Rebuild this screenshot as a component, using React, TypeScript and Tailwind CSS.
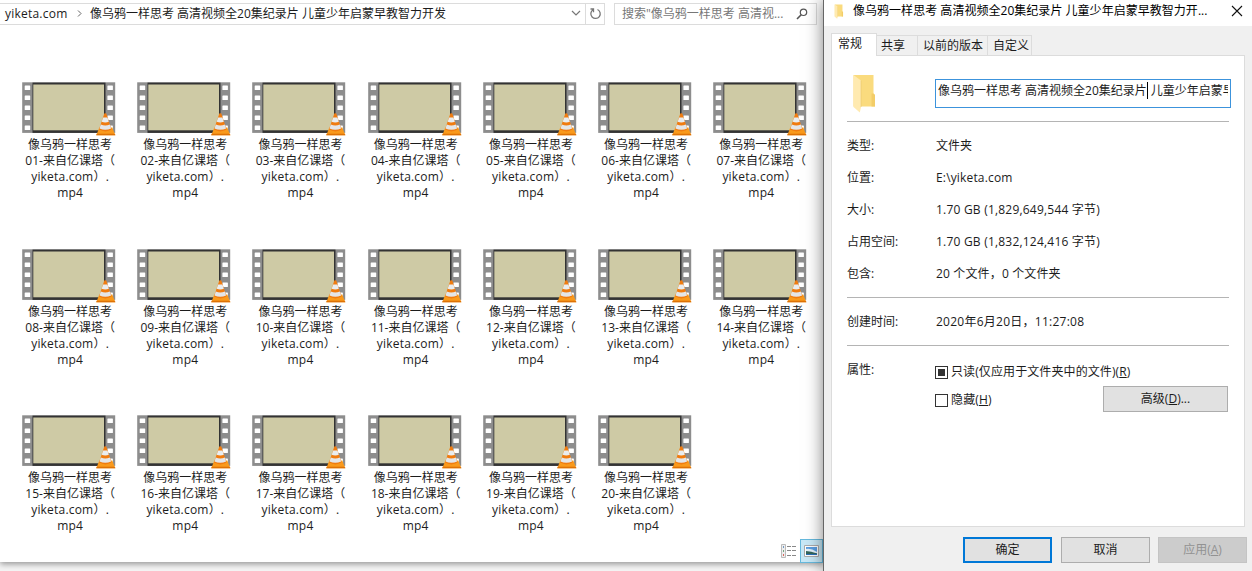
import React from "react";

const TITLE = "像乌鸦一样思考 高清视频全20集纪录片 儿童少年启蒙早教智力开";

const episodes = Array.from({ length: 20 }, (_, i) => String(i + 1).padStart(2, "0"));

const details = [
  ["类型:", "文件夹", ""],
  ["位置:", "E:\\yiketa.com", "tracking-[0.16px]"],
  ["大小:", "1.70 GB (1,829,649,544 字节)", "tracking-[0.21px]"],
  ["占用空间:", "1.70 GB (1,832,124,416 字节)", "tracking-[0.21px]"],
  ["包含:", "20 个文件，0 个文件夹", "tracking-[0.15px]"],
];

function FilmIcon() {
  const holes = [5.5, 15.5, 25.5, 35.5, 45.5];
  return (
    <svg width="94" height="54" viewBox="0 0 94 54" className="block">
      <rect x="0.2" y="0.3" width="93" height="50.6" fill="#8d8d8d" />
      <rect x="10.5" y="0.6" width="73" height="50.3" fill="#333" />
      <rect x="11.3" y="2.5" width="70.7" height="45.8" fill="#cecaa5" />
      {holes.map((y) => (
        <g key={y} fill="#fff">
          <rect x="2.7" y={y - 2.1} width="5.5" height="4.6" rx="0.6" />
          <rect x="85.4" y={y - 2.1} width="5.5" height="4.6" rx="0.6" />
        </g>
      ))}
      <path d="M77.300 45.500h13l3 7.700H74.300z" fill="#f99a1c" />
      <path d="M74.600 51.800h18.400l.3 1.400H74.300z" fill="#dd7206" />
      <path d="M82.300 31.600q1-.8 2 0l5.300 16q-6 3.600-12.600 0z" fill="#f07c10" />
      <path d="M81.100 35.600h4.400l1.300 4.100q-3.500 1.500-7.100 0z" fill="#e9edf0" />
      <path d="M78.800 42.600q4.500 2 9 0l1.300 3.800q-5.800 2.800-11.600 0z" fill="#e4e6e8" />
    </svg>
  );
}

function FolderIcon({ width, height }: { width: number; height: number }) {
  return (
    <svg width={width} height={height} viewBox="0 0 23 39" className="block">
      <path d="M.5 1H20.500v18.500l1.500 1.500v11.500H.5z" fill="#fadb7e" />
      <path d="M18.500 19.500h2l1.500 1.500v11.500h-3.500z" fill="#f3cd68" />
      <path d="M.5 1l7.500 5.500v26.500L6.800 38.500.5 33z" fill="#ffeab0" />
      <path d="M7.700 6.500h.7V33h-.7z" fill="#eccb70" />
    </svg>
  );
}

function FileItem({ no }: { no: string }) {
  return (
    <div className="flex h-[166.5px] flex-col items-center">
      <FilmIcon />
      <div className="whitespace-nowrap pl-[2px] pt-px text-center leading-4">
        <div>像乌鸦一样思考</div>
        <div>{no}-来自亿课塔（</div>
        <div className="tracking-[0.2px]">yiketa.com）.</div>
        <div className="tracking-[0.2px]">mp4</div>
      </div>
    </div>
  );
}

function Explorer() {
  return (
    <section className="flex h-[562px] w-[823px] shrink-0 flex-col bg-white shadow-[0_2px_6px_rgba(0,0,0,0.4)]">
      <header className="flex h-[25px] shrink-0 items-center pt-[2px]">
        <div className="flex h-[22px] w-[605px] items-center border-y border-r border-[#dcdcdc] pl-[5px]">
          <span className="w-[71px] tracking-[0.22px]">yiketa.com</span>
          <svg width="8" height="9" viewBox="0 0 8 9" fill="none" stroke="#666">
            <path d="M2 1.500l3 3-3 3" />
          </svg>
          <span className="ml-[6px] flex-1 whitespace-nowrap">{TITLE}发</span>
          <svg width="10" height="7" viewBox="0 0 10 7" fill="none" stroke="#777" strokeWidth="1.2">
            <path d="M1 1l4 4 4-4" />
          </svg>
          <div className="ml-[4px] flex h-full w-[19px] items-center justify-center border-l border-[#dcdcdc]">
            <svg width="13" height="13" viewBox="0 0 13 13" fill="none" stroke="#777" strokeWidth="1.3">
              <path d="M8.500 2.500a4.700 4.700 0 1 1-4.500.3M1.500 2h3v3.300" />
            </svg>
          </div>
        </div>
        <div className="ml-[9px] flex h-[22px] w-[203px] items-center justify-between border border-[#dcdcdc] pl-[7px] pr-[8px] text-[#777]">
          <span className="whitespace-nowrap">搜索"像乌鸦一样思考 高清视...</span>
          <svg width="12" height="12" viewBox="0 0 12 12" fill="none" stroke="#555" strokeWidth="1.2">
            <circle cx="7.500" cy="4.300" r="3.200" />
            <path d="M5.200 6.700L1 11" strokeWidth="1.600" />
          </svg>
        </div>
      </header>
      <main className="ml-[11.5px] grid min-h-0 w-[806.4px] flex-1 grid-cols-7 content-start pt-[57px]">
        {episodes.map((no) => (
          <FileItem key={no} no={no} />
        ))}
      </main>
      <footer className="-mb-px flex h-[24px] shrink-0 items-center justify-end">
        <svg width="16" height="14" viewBox="0 0 16 14" className="mr-[3px]">
          <path d="M.5.5h4v13h-4z" fill="#eee" stroke="#bbb" />
          <path d="M6 2.500h4M11 2.500h4M6 6.500h4M11 6.500h4M6 11.500h4M11 11.500h4" stroke="#888" />
          <path d="M2 3h1" stroke="#4479b0" strokeWidth="1.500" />
          <path d="M2 7h1" stroke="#4b8a58" strokeWidth="1.500" />
          <path d="M2 11h1" stroke="#d23a2a" strokeWidth="1.500" />
        </svg>
        <div className="flex h-[24px] w-[23px] items-center justify-center border border-[#66b9dd] bg-[#c8e8f6]">
          <svg width="15" height="12" viewBox="0 0 15 12">
            <path d="M.5.5h14v11H.5z" fill="#fff" stroke="#aaa" />
            <path d="M2 2h11v8H2z" fill="#5b9ee0" />
            <path d="M2 4q5-1 11 3v1H2z" fill="#e4f1fa" />
            <path d="M2 6q5 0 11 2.500V10H2z" fill="#33665c" />
            <path d="M2 9h11v1H2z" fill="#2c71b8" />
          </svg>
        </div>
      </footer>
    </section>
  );
}

function Rule() {
  return <div className="h-px w-[382px] shrink-0 bg-[#b4b4b4]" />;
}

function PropertiesDialog() {
  return (
    <section className="relative flex h-[571px] w-[429px] shrink-0 flex-col border-l border-[#666] bg-[#f0f0f0] shadow-[0_0_16px_rgba(0,0,0,0.5)]">
      <header className="flex h-[26px] items-center bg-white pb-[4px] pl-[10px] text-black">
        <FolderIcon width={10} height={15} />
        <span className="ml-[9px] w-[378px] whitespace-nowrap tracking-[0.03px]">{TITLE}...</span>
        <svg width="12" height="12" viewBox="0 0 12 12" stroke="#111" strokeWidth="1.100">
          <path d="M1 1l10 10M11 1L1 11" />
        </svg>
      </header>
      <nav className="flex h-[29px] items-end pl-[7px]">
        <div className="z-10 -mb-px flex h-[23px] w-[46px] border border-b-0 border-[#dcdcdc] bg-white pl-[6px] pt-px">常规</div>
        <div className="flex h-[20px] w-[41px] items-center border-r border-t border-[#dcdcdc] pl-[4px]">共享</div>
        <div className="flex h-[20px] w-[70px] items-center border-r border-t border-[#dcdcdc] pl-[5px]">以前的版本</div>
        <div className="flex h-[20px] w-[44px] items-center border-r border-t border-[#dcdcdc] pl-[5px]">自定义</div>
      </nav>
      <div className="ml-[7px] flex h-[472px] w-[414px] flex-col border border-[#dcdcdc] bg-white pl-[15px]">
        <div className="flex h-[65px] shrink-0 items-start pt-[18px]">
          <div className="w-[88px] pl-[6px]">
            <FolderIcon width={23} height={39} />
          </div>
          <div className="mt-[5px] flex h-[29px] w-[296px] overflow-hidden whitespace-nowrap border border-[#3c93dc] pl-[2px] pr-[2px] pt-[2px]">
            <div className="flex w-full overflow-hidden">
              <span>像乌鸦一样思考 高清视频全20集纪录片</span>
              <span className="h-[17px] w-px shrink-0 bg-black" />
              <span className="ml-[3px]">儿童少年启蒙早教</span>
            </div>
          </div>
        </div>
        <Rule />
        <div className="flex h-[175px] shrink-0 flex-col pt-[8px]">
          {details.map(([k, v, cls]) => (
            <div key={k} className="flex h-[32px] items-center">
              <span className="w-[89px]">{k}</span>
              <span className={cls}>{v}</span>
            </div>
          ))}
        </div>
        <Rule />
        <div className="flex h-[47px] shrink-0 items-center">
          <span className="w-[89px]">创建时间:</span>
          <span className="tracking-[0.25px]">2020年6月20日，11:27:08</span>
        </div>
        <Rule />
        <div className="flex pt-[15px]">
          <span className="w-[88px]">属性:</span>
          <div className="flex w-[168px] flex-col pt-px">
            <label className="flex h-[20px] items-center whitespace-nowrap">
              <span className="mr-[3px] flex size-[13px] shrink-0 items-center justify-center border border-[#333] bg-white">
                <span className="size-[7px] bg-[#333]" />
              </span>
              <span className="tracking-[0.1px]">只读(仅应用于文件夹中的文件)(<u>R</u>)</span>
            </label>
            <label className="mt-[8px] flex h-[20px] items-center">
              <span className="mr-[3px] size-[13px] border border-[#333] bg-white" />
              <span className="tracking-[0.15px]">隐藏(<u>H</u>)</span>
            </label>
          </div>
          <button className="mt-[25px] h-[26px] w-[125px] border border-[#adadad] bg-[#e1e1e1]">高级(<u>D</u>)...</button>
        </div>
      </div>
      <footer className="flex gap-[9px] pl-[139px] pt-[10px]">
        <button className="h-[26px] w-[89px] border-2 border-[#0078d7] bg-[#e1e1e1]">确定</button>
        <button className="h-[26px] w-[89px] border border-[#adadad] bg-[#e1e1e1]">取消</button>
        <button className="-ml-px h-[26px] w-[89px] border border-[#c4c4c4] bg-[#cccccc] text-[#929292]">应用(<u>A</u>)</button>
      </footer>
    </section>
  );
}

export default function App() {
  return (
    <div className="flex h-[571px] w-[1252px] overflow-hidden bg-[#f4f4f4] font-['Open_Sans','Noto_Sans_CJK_SC',sans-serif] text-[12px] leading-[18px] text-[#1c1c1c]">
      <Explorer />
      <PropertiesDialog />
    </div>
  );
}
